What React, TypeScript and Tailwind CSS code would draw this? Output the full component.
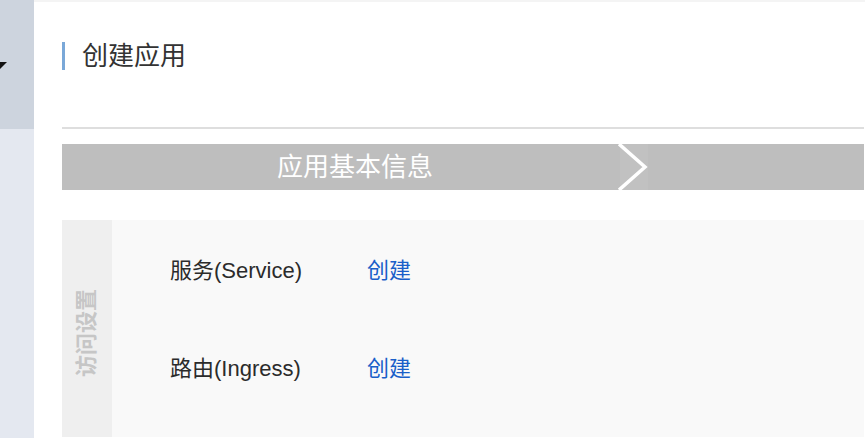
/**
 * 创建应用: step header + access settings panel.
 */

const font = "font-['Liberation_Sans','Noto_Sans_CJK_SC',sans-serif]";

const accessRows = [
   { label: '服务(Service)', action: '创建' },
   { label: '路由(Ingress)', action: '创建' },
];

function Sidebar() {
   return (
      <aside className="flex w-[34px] shrink-0 flex-col">
         <div className="h-[129px] bg-[#cdd4de] pt-[62px]">
            <svg width="7" height="7" viewBox="0 0 7 7" className="block">
               <polygon points="0,0 7,0 0,7" fill="#111" />
            </svg>
         </div>
         <div className="flex-1 bg-[#e4e8f0]" />
      </aside>
   );
}

function StepBar() {
   return (
      <div className="mt-[15px] flex h-[46px]">
         <div className="relative flex w-[586px] items-center justify-center bg-[#bebebe]">
            <span className="text-[26px] leading-none text-white">应用基本信息</span>
            <svg
               width="30"
               height="46"
               viewBox="0 0 30 46"
               className="absolute right-0 top-0 bg-[#c1c1c1]"
            >
               <rect x="0" y="0" width="2" height="46" fill="#bebebe" />
               <polyline points="1,0 27,23 1,46" fill="none" stroke="#fff" strokeWidth="3.5" />
            </svg>
         </div>
         <div className="flex-1 bg-[#bebebe]" />
      </div>
   );
}

function AccessPanel() {
   return (
      <section className="mt-[30px] flex h-[217px]">
         <div className="flex w-[50px] shrink-0 items-center justify-center bg-[#efefef] pt-[8px]">
            <span className="-rotate-90 shrink-0 whitespace-nowrap text-[22px] font-bold leading-none text-[#c6c6c6]">
               访问设置
            </span>
         </div>
         <div className="flex-1 bg-[#f9f9f9] pl-[58px] pt-[1px]">
            {accessRows.map((row) => (
               <div key={row.label} className="flex h-[98px] items-center">
                  <span className="w-[197px] text-[22px] text-[#2b2b2b]">{row.label}</span>
                  <a className="cursor-pointer text-[22px] text-[#1a5fc9]">{row.action}</a>
               </div>
            ))}
         </div>
      </section>
   );
}

export default function App() {
   return (
      <div className={`flex h-[438px] w-[865px] overflow-hidden bg-white ${font}`}>
         <Sidebar />
         <main className="flex flex-1 flex-col">
            <div className="h-[2px] bg-[#f4f4f4]" />
            <div className="flex flex-1 flex-col pl-[28px] pr-[1px]">
               <div className="mt-[40px] flex h-[28px] items-center">
                  <div className="h-[28px] w-[3px] bg-[#7aa8d8]" />
                  <h1 className="ml-[17px] text-[26px] leading-none text-[#333]">创建应用</h1>
               </div>
               <div className="mt-[57px] h-[2px] bg-[#dedede]" />
               <StepBar />
               <AccessPanel />
            </div>
         </main>
      </div>
   );
}
